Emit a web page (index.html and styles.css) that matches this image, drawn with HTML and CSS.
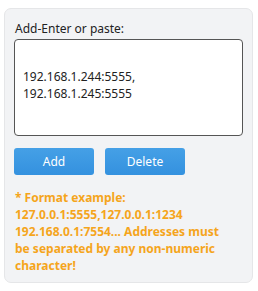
FILE: index.html
```html
<!DOCTYPE html>
<html lang="en">
<head>
  <meta charset="UTF-8">
  <title>Address list</title>
  <link rel="stylesheet" href="styles.css">
</head>
<body>
  <div class="panel">
    <div class="label">Add-Enter or paste:</div>
    <div class="address-box">192.168.1.244:5555,<br>192.168.1.245:5555</div>
    <div class="button-row">
      <button class="blue-button">Add</button>
      <button class="blue-button">Delete</button>
    </div>
    <div class="hint">* Format example: 127.0.0.1:5555,127.0.0.1:1234 192.168.0.1:7554... Addresses must be separated by any non-numeric character!</div>
  </div>
</body>
</html>
```

FILE: styles.css
```css
body {
  margin: 0;
  padding: 0;
  background: #fff;
  font-family: 'Noto Sans', 'Open Sans', sans-serif;
  font-size: 12px;
}

.panel {
  margin: 8px 5px 0 4px;
  height: 275px;
  box-sizing: border-box;
  background: #f2f3f5;
  border: 1px solid #e5e6e8;
  border-radius: 7px;
  padding: 11px 9px 0 9px;
}

.label {
  color: #222;
  line-height: 17px;
  margin-bottom: 2px;
  margin-left: 1px;
}

.address-box {
  height: 97px;
  box-sizing: border-box;
  background: #fff;
  border: 1.5px solid #555;
  border-radius: 4px;
  padding: 28px 8px 0 8px;
  color: #222;
  line-height: 17px;
}

.button-row {
  display: flex;
  gap: 11px;
  margin-top: 12px;
}

.blue-button {
  width: 80px;
  height: 27px;
  border: none;
  border-radius: 3px;
  background: linear-gradient(#45a0e6, #3491df);
  color: #fff;
  font-family: 'Noto Sans', 'Open Sans', sans-serif;
  font-size: 12px;
}

.hint {
  margin-top: 14px;
  margin-left: 1px;
  padding-right: 14px;
  color: #f5a51c;
  font-weight: bold;
  line-height: 17px;
}
```
